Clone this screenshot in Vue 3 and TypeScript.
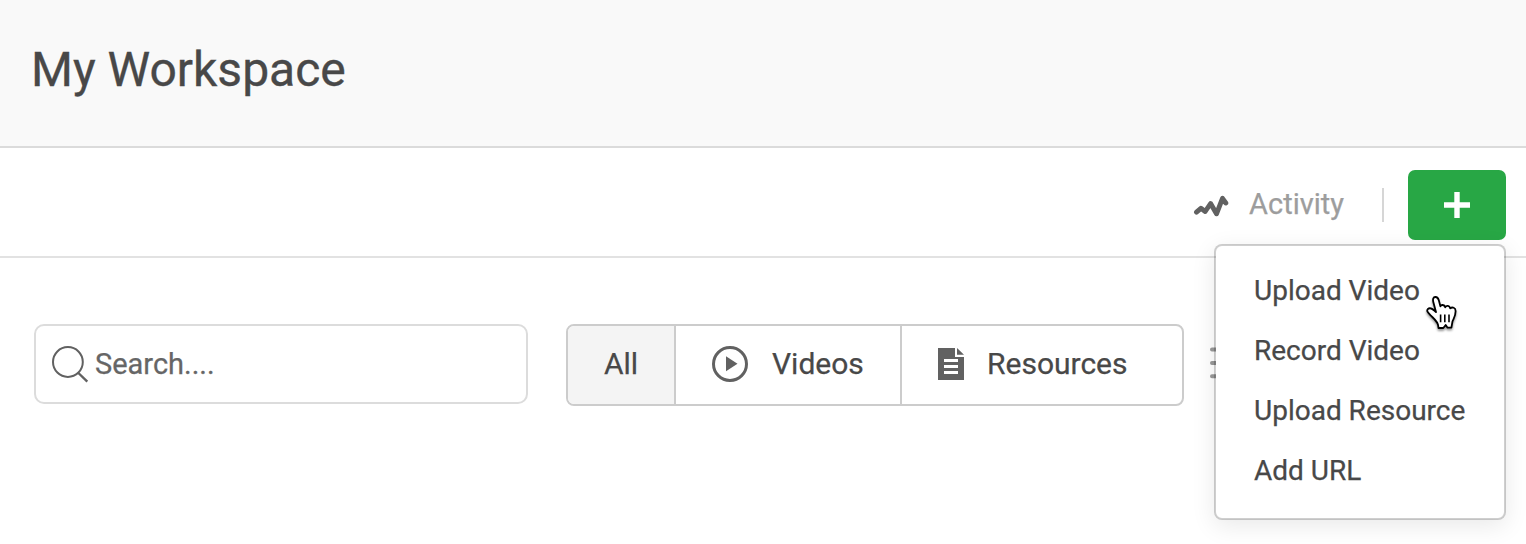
<script setup lang="ts">
const menuItems: string[] = ['Upload Video', 'Record Video', 'Upload Resource', 'Add URL']
</script>

<template>
  <div class="page">
    <header class="header">
      <h1 class="title">My Workspace</h1>
    </header>

    <div class="toolbar">
      <a class="activity">
        <svg class="activity-icon" width="36" height="24" viewBox="0 0 36 24">
          <path d="M3.5 17.2 7.9 13.3 12.2 16.5 17.6 8.5 23.5 18.8 29.5 3.4 32.8 8" fill="none" stroke="#616161" stroke-width="4.9" stroke-linecap="round" stroke-linejoin="round" />
        </svg>
        <span class="activity-label">Activity</span>
      </a>
      <span class="divider"></span>
      <div class="add-wrap">
        <button class="add" aria-label="Add">
          <svg width="26" height="26" viewBox="0 0 26 26">
            <path d="M13 0V26M0 13H26" stroke="#fff" stroke-width="5.4" />
          </svg>
        </button>
        <ul class="menu">
          <li v-for="item in menuItems" :key="item" class="menu-item">
            <span>{{ item }}</span>
          </li>
        </ul>
        <svg class="cursor" width="36" height="40" viewBox="0 0 36 40">
          <path d="M14 30.7 C12.8 26.8 9.8 24.6 6.6 21.3 C3.4 18 2.4 16.7 3.9 15 C5.9 13.2 8.6 14.6 12 18.1 L9.3 8 C8.5 4.8 9.5 3.2 11.2 3 C13 2.8 14.2 4.1 14.8 6.2 L16.4 12.3 C17 10.5 20.4 10.3 21.2 13.3 C22.5 11.1 25.6 11.5 26.2 14.4 C28.3 12.7 31.6 13.6 31.6 17 C31.7 22 29.8 24.3 28.5 27.3 L27.4 33.7 H23.6 L21.7 31 L19.3 34 H14.5 Z" fill="#fff" stroke="#000" stroke-width="1.8" stroke-linejoin="round" />
          <path d="M16.6 20.5V28.3M20.8 20.5V28.3M25 20.5V28.3" stroke="#000" stroke-width="1.6" />
        </svg>
      </div>
    </div>

    <main class="content">
      <label class="search">
        <svg width="38" height="38" viewBox="0 0 38 38" fill="none" stroke="#616161" stroke-width="2">
          <circle cx="16.9" cy="17" r="14.9" />
          <path d="M27.4 28 36.3 36.7" stroke-width="2.4" />
        </svg>
        <span class="search-label">Search....</span>
      </label>

      <div class="filters">
        <button class="filter all"><span>All</span></button>
        <button class="filter videos">
          <svg width="36" height="36" viewBox="0 0 36 36">
            <circle cx="18" cy="18" r="16.5" fill="none" stroke="#616161" stroke-width="3" />
            <path d="M14 10.2 25.5 17.7 14 25.3Z" fill="#616161" />
          </svg>
          <span>Videos</span>
        </button>
        <button class="filter resources">
          <svg width="26" height="32" viewBox="0 0 26 32">
            <path d="M0 0H17V9H26V32H0ZM19 0 26 6.8H19Z" fill="#616161" />
            <path d="M6 12.5H20M6 18.5H20M6 24.5H20" stroke="#fff" stroke-width="2.8" />
          </svg>
          <span>Resources</span>
        </button>
      </div>

      <svg class="list-icon" width="34" height="34" viewBox="0 0 34 34">
        <path d="M2 3.5H32M2 17H32M2 30.2H32" stroke="#999" stroke-width="4" stroke-linecap="round" />
      </svg>
    </main>
  </div>
</template>

<style>
body {
  margin: 0;
  background: #fff;
}
</style>

<style scoped>
.page {
  height: 544px;
  overflow: hidden;
  color: #484848;
  font-family: Roboto, "Liberation Sans", sans-serif;
  -webkit-text-stroke: 0.25px currentColor;
  background: #fff;
}
.page * {
  box-sizing: border-box;
}
svg {
  display: block;
  flex: none;
}
button {
  margin: 0;
  padding: 0;
  border: 0;
  background: none;
  color: inherit;
  font: inherit;
}
.header {
  height: 148px;
  padding: 42px 31px 0;
  background: #f9f9f9;
  border-bottom: 2px solid #dbdbdb;
}
.title {
  margin: 0;
  font-size: 48px;
  line-height: 56px;
  font-weight: 400;
  -webkit-text-stroke-width: 0.35px;
}
.toolbar {
  display: flex;
  align-items: center;
  justify-content: flex-end;
  height: 110px;
  padding: 2px 20px 0 0;
  border-bottom: 2px solid #e2e2e2;
}
.activity {
  display: flex;
  align-items: center;
  margin-top: 2px;
  color: #9d9d9d;
  font-size: 29px;
  line-height: 36px;
}
.activity-icon {
  margin: 6px 20px 0 0;
}
.divider {
  width: 2px;
  height: 34px;
  margin: 4px 24px 0 38px;
  background: #d6d6d6;
}
.add-wrap {
  position: relative;
  margin-top: 4px;
}
.add {
  display: flex;
  align-items: center;
  justify-content: center;
  width: 98px;
  height: 70px;
  border-radius: 7px;
  background: #28a745;
}
.menu {
  position: absolute;
  z-index: 2;
  top: 74px;
  right: 0;
  width: 292px;
  height: 276px;
  margin: 0;
  padding: 14px 0 18px;
  list-style: none;
  background: #fff;
  background-clip: padding-box;
  border: 2px solid rgba(0, 0, 0, 0.19);
  border-radius: 8px;
  box-shadow: 0 6px 24px rgba(0, 0, 0, 0.09);
}
.menu-item {
  display: flex;
  align-items: center;
  height: 60px;
  padding-left: 38px;
  font-size: 28px;
  white-space: nowrap;
}
.cursor {
  position: absolute;
  z-index: 3;
  left: 16px;
  top: 124px;
  filter: drop-shadow(0 2px 1px rgba(0, 0, 0, 0.4));
}
.content {
  display: flex;
  align-items: flex-start;
  padding: 66px 0 0 34px;
}
.search {
  display: flex;
  align-items: center;
  width: 494px;
  height: 80px;
  padding: 0 0 1px 15px;
  border: 2px solid #dcdcdc;
  border-radius: 10px;
  color: #666;
  font-size: 29px;
}
.search-label {
  margin-left: 6px;
}
.filters {
  display: flex;
  width: 618px;
  height: 82px;
  margin-left: 38px;
  border: 2px solid #ccc;
  border-radius: 8px;
  overflow: hidden;
  font-size: 30px;
}
.filter {
  display: flex;
  align-items: center;
  padding-bottom: 2px;
}
.filter span {
  margin-bottom: 2px;
}
.filter + .filter {
  border-left: 2px solid #ccc;
}
.all {
  width: 106px;
  justify-content: center;
  background: #f4f4f4;
}
.videos {
  width: 226px;
  padding-left: 36px;
}
.videos span {
  margin-left: 24px;
}
.resources {
  flex: 1;
  padding-left: 36px;
}
.resources span {
  margin-left: 23px;
}
.list-icon {
  margin: 22px 0 0 26px;
}
</style>
